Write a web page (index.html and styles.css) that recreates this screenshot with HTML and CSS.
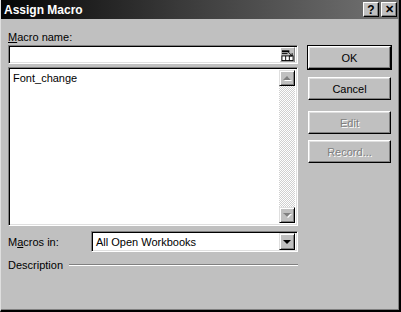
FILE: index.html
```html
<!DOCTYPE html>
<html>
<head>
<meta name="viewport" content="width=device-width, initial-scale=1">
<link rel="stylesheet" href="styles.css">
</head>
<body>

<div class="dialog">
    <!-- Title bar -->
    <div class="titlebar">
        <span class="title">Assign Macro</span>
        <div class="caption-btns">
            <span class="cap-btn">?</span>
            <span class="cap-btn cap-close">✕</span>
        </div>
    </div>

    <div class="content">
        <div class="left-col">
            <div class="label"><u>M</u>acro name:</div>
            <div class="field name-field">
                <span class="refedit">
                    <svg width="14" height="14" viewBox="0 0 14 14">
                        <rect x="0" y="0" width="14" height="14" fill="#c0c0c0"/>
                        <rect x="1" y="2" width="8" height="2" fill="#000"/>
                        <rect x="1" y="5" width="6" height="1" fill="#000"/>
                        <rect x="1" y="8" width="12" height="5" fill="#fff" stroke="#000" stroke-width="1"/>
                        <line x1="5" y1="8" x2="5" y2="13" stroke="#000"/>
                        <line x1="9" y1="8" x2="9" y2="13" stroke="#000"/>
                        <path d="M8 4 L12 8 M12 5 L12 8 L9 8" stroke="#000" fill="none"/>
                    </svg>
                </span>
            </div>
            <div class="field listbox">
                <div class="items">
                    <div class="item">Font_change</div>
                </div>
                <div class="scrollbar">
                    <span class="sb-btn"><span class="tri-up disabled"></span></span>
                    <span class="sb-track"></span>
                    <span class="sb-btn"><span class="tri-down disabled"></span></span>
                </div>
            </div>
            <div class="macros-row">
                <span class="row-label">M<u>a</u>cros in:</span>
                <div class="field combo">
                    <span class="combo-text">All Open Workbooks</span>
                    <span class="sb-btn combo-btn"><span class="tri-down"></span></span>
                </div>
            </div>
            <div class="desc-row">
                <span>Description</span>
                <span class="desc-line"></span>
            </div>
        </div>

        <div class="right-col">
            <button class="btn btn-default">OK</button>
            <button class="btn btn-cancel">Cancel</button>
            <button class="btn btn-edit" disabled>Edit</button>
            <button class="btn btn-record" disabled>Record...</button>
        </div>
    </div>
</div>

</body>
</html>
```

FILE: styles.css
```css
* {
    box-sizing: border-box;
    margin: 0;
    padding: 0;
}

body {
    font-family: 'Liberation Sans', Arial, sans-serif;
    font-size: 11px;
    color: #000;
    background: #c0c0c0;
}

.dialog {
    width: 401px;
    height: 312px;
    background: #c0c0c0;
    border-left: 1px solid #dfdfdf;
    border-right: 2px solid #000;
    border-bottom: 2px solid #000;
    box-shadow: inset -1px -1px #808080;
    display: flex;
    flex-direction: column;
}

.titlebar {
    height: 19px;
    background: linear-gradient(to right, #050505, #3a3a3a 45%, #747474);
    display: flex;
    align-items: center;
    justify-content: space-between;
    padding: 0 2px 0 3px;
}

.title {
    color: #fff;
    font-weight: bold;
    font-size: 12px;
}

.caption-btns {
    display: flex;
    gap: 2px;
}

.cap-btn {
    width: 16px;
    height: 15px;
    background: #c0c0c0;
    border: 1px solid;
    border-color: #fff #000 #000 #fff;
    box-shadow: inset -1px -1px #808080;
    display: flex;
    align-items: center;
    justify-content: center;
    font-weight: bold;
    font-size: 12px;
    line-height: 1;
}

.cap-close {
    font-size: 11px;
}

.content {
    display: flex;
    padding: 12px 0 0 7px;
    gap: 10px;
}

.left-col {
    width: 290px;
    display: flex;
    flex-direction: column;
}

.label {
    height: 14px;
    line-height: 12px;
}

.field {
    background: #fff;
    border: 1px solid;
    border-color: #808080 #fff #fff #808080;
    box-shadow: inset 1px 1px #000, inset -1px -1px #dfdfdf;
}

.name-field {
    height: 19px;
    display: flex;
    justify-content: flex-end;
    align-items: center;
    padding-right: 2px;
}

.refedit {
    display: flex;
    width: 15px;
    height: 15px;
    border: 1px solid;
    border-color: #fff #808080 #808080 #fff;
    background: #c0c0c0;
}

.listbox {
    margin-top: 3px;
    height: 159px;
    display: flex;
    padding: 2px;
}

.items {
    flex: 1;
    padding: 2px 0 0 2px;
}

.item {
    line-height: 13px;
}

.scrollbar {
    width: 16px;
    display: flex;
    flex-direction: column;
}

.sb-track {
    flex: 1;
    background: repeating-conic-gradient(#fff 0 25%, #d0d0d0 0 50%) 0 0 / 2px 2px;
}

.sb-btn {
    width: 16px;
    height: 16px;
    background: #c0c0c0;
    border: 1px solid;
    border-color: #dfdfdf #000 #000 #dfdfdf;
    box-shadow: inset 1px 1px #fff, inset -1px -1px #808080;
    display: flex;
    align-items: center;
    justify-content: center;
}

.tri-up,
.tri-down {
    width: 0;
    height: 0;
    border-left: 4px solid transparent;
    border-right: 4px solid transparent;
}

.tri-up {
    border-bottom: 4px solid #000;
}

.tri-down {
    border-top: 4px solid #000;
}

.tri-up.disabled {
    border-bottom-color: #808080;
    filter: drop-shadow(1px 1px 0 #fff);
}

.tri-down.disabled {
    border-top-color: #808080;
    filter: drop-shadow(1px 1px 0 #fff);
}

.macros-row {
    margin-top: 5px;
    display: flex;
    align-items: center;
    justify-content: space-between;
}

.combo {
    width: 207px;
    height: 21px;
    display: flex;
    align-items: center;
    justify-content: space-between;
    padding: 2px;
}

.combo-text {
    padding-left: 2px;
}

.combo-btn {
    height: 17px;
}

.desc-row {
    margin-top: 6px;
    height: 14px;
    display: flex;
    align-items: center;
    gap: 6px;
}

.desc-line {
    flex: 1;
    height: 2px;
    border-top: 1px solid #808080;
    border-bottom: 1px solid #fff;
}

.right-col {
    display: flex;
    flex-direction: column;
    padding-top: 15px;
}

.btn {
    width: 83px;
    height: 23px;
    font-family: inherit;
    font-size: 11px;
    background: #c0c0c0;
    color: #000;
    border: 1px solid;
    border-color: #fff #000 #000 #fff;
    box-shadow: inset -1px -1px #808080, inset 1px 1px #dfdfdf;
}

.btn-default {
    outline: 1px solid #000;
}

.btn-cancel {
    margin-top: 8px;
}

.btn-edit {
    margin-top: 11px;
}

.btn-record {
    margin-top: 6px;
}

.btn:disabled {
    color: #808080;
    text-shadow: 1px 1px #fff;
}
```
